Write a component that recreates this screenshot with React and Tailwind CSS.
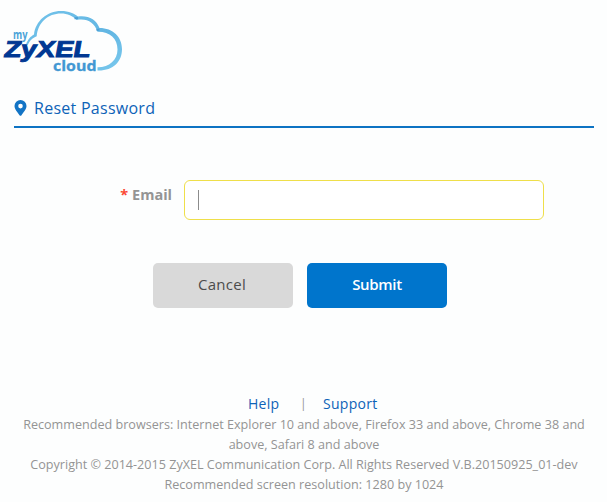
function Logo() {
  return (
    <svg width="130" height="80" viewBox="0 0 130 80" role="img" aria-label="myZyXEL cloud" className="block">
      <defs>
        <linearGradient id="cloud" x1="0" y1="0" x2="1" y2="1">
          <stop offset="0" stopColor="#73c3ea" />
          <stop offset="0.6" stopColor="#62b6e3" />
          <stop offset="1" stopColor="#7ac9ed" />
        </linearGradient>
      </defs>
      <g fill="url(#cloud)">
        <path d="M26 44.500C28 39 30.500 36.500 34 34.500C35.500 21 47 11 61 11C69 11 74.500 13.500 78 16.500C88 15 96.500 19.500 99.500 28C113 28 122 37 122 49C122 62 113 71 97.500 70.500V67.300C109 67.500 117.500 60 117.500 49.500C117.500 38 109.500 31.500 97.500 31.800C94.500 22.500 87 18 76.500 20C73 16 67.500 13.500 61 13.500C48 13.500 38 22.500 36.700 36.200C32.500 38 30 40 27.800 45Z" />
      </g>
      <path d="M74.500 18.200L78 18M96.500 30L99.500 29.500" stroke="#4a9fd5" strokeWidth="2" />
      <g fontFamily="'Open Sans', sans-serif" fontWeight="700">
        <text x="13" y="38.500" fontSize="11.500" fill="#4ba3d8" textLength="14.500" lengthAdjust="spacingAndGlyphs">my</text>
        <text transform="translate(4.700 57) skewX(3)" fontFamily="'Liberation Sans', sans-serif" fontSize="23" fontStyle="italic" fontWeight="700" fill="#003893" stroke="#003893" strokeWidth="1" textLength="86" lengthAdjust="spacingAndGlyphs">ZyXEL</text>
        <text x="53" y="70.500" fontSize="15" fill="#4298d3" stroke="#4298d3" strokeWidth="0.300" textLength="43.500" lengthAdjust="spacingAndGlyphs">cloud</text>
      </g>
    </svg>
  );
}

function Pin() {
  return (
    <svg width="13" height="16" viewBox="0 0 13 16" className="block" aria-hidden="true">
      <path fill="#1274c5" fillRule="evenodd" d="M6.500 0A6 6 0 0 0 .5 6C.5 9.500 4 12.500 5.500 15.300Q6.500 16.400 7.500 15.300C9 12.500 12.500 9.500 12.500 6A6 6 0 0 0 6.500 0ZM6.500 3.800A2.300 2.300 0 1 1 6.500 8.400A2.300 2.300 0 0 1 6.500 3.800Z" />
    </svg>
  );
}

export default function App() {
  return (
    <div className="h-[502px] w-[607px] overflow-hidden bg-[#fdfefe] font-['Open_Sans',sans-serif]">
      <header className="h-20">
        <Logo />
      </header>
      <main>
        <div className="ml-3.5 flex h-12 w-[580px] items-center gap-[7px] border-b-2 border-[#0d73c3] pt-2.5">
          <Pin />
          <h1 className="text-base leading-6 tracking-[0.27px] text-[#0d63b8]">Reset Password</h1>
        </div>
        <form className="pt-[52px]" onSubmit={(e) => e.preventDefault()}>
          <div className="flex h-10">
            <label className="w-[172px] pt-1 text-right text-[14.5px] leading-[22px] font-bold text-[#949494]">
              <span className="text-[#fb4934]">*</span> Email
            </label>
            <div className="ml-3 flex w-[360px] items-center rounded-md border border-[#efdf4a] bg-white pl-[13px]">
              <span className="h-5 w-px bg-[#8c8c8c]" />
            </div>
          </div>
          <div className="mt-[43px] ml-[153px] flex gap-3.5 text-[15px]">
            <button type="button" className="h-[45px] w-[140px] rounded-[5px] bg-[#d9d9d9] pr-0.5 pb-0.5 tracking-[0.3px] text-[#4c4c4c]">Cancel</button>
            <button type="submit" className="h-[45px] w-[140px] rounded-[5px] bg-[#0075cc] pb-0.5 font-semibold tracking-[-0.3px] text-white">Submit</button>
          </div>
        </form>
      </main>
      <footer className="mt-[86px] text-[12.6px] leading-5 text-[#949494]">
        <div className="ml-[248px] flex h-5 items-center text-sm tracking-[0.3px] text-[#0d63b8]">
          <a className="w-[52px]">Help</a>
          <span className="w-[23px] text-xs text-[#949494]">|</span>
          <a>Support</a>
        </div>
        <div className="ml-3.5 w-[580px] pt-px text-center">
          <p>Recommended browsers: Internet Explorer 10 and above, Firefox 33 and above, Chrome 38 and<br />above, Safari 8 and above</p>
          <p>Copyright © 2014-2015 ZyXEL Communication Corp. All Rights Reserved V.B.20150925_01-dev</p>
          <p>Recommended screen resolution: 1280 by 1024</p>
        </div>
      </footer>
    </div>
  );
}
